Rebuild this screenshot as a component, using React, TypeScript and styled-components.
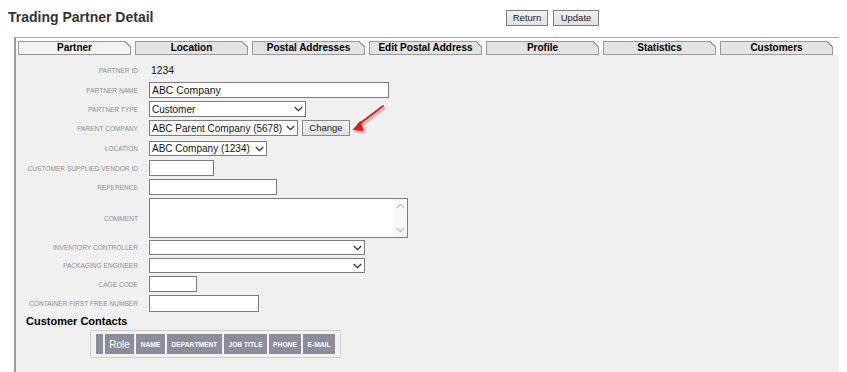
import React from 'react';
import styled, { createGlobalStyle } from 'styled-components';

const Global = createGlobalStyle`
  html, body { background: #ffffff; }
  body {
    margin: 8px;
    font-family: "Liberation Sans", Arial, sans-serif;
    color: #000;
  }
  * { box-sizing: border-box; }
`;

const Page = styled.div`
  position: relative;
`;

const Header = styled.header`
  display: grid;
  grid-template-columns: 498px auto;
  align-items: start;
  height: 29px;
`;

const Title = styled.h1`
  margin: 1px 0 0 0;
  font-size: 14px;
  line-height: 16px;
  font-weight: bold;
  color: #333;
`;

const ButtonGroup = styled.div`
  display: flex;
  gap: 5px;
  margin-top: 2px;
`;

const Button = styled.button<{ $w: number }>`
  width: ${(p) => p.$w}px;
  height: 16px;
  padding: 0;
  border: 1px solid #7d7d7d;
  background: linear-gradient(#f0f0f0, #e2e2e2);
  font-family: "Liberation Sans", Arial, sans-serif;
  font-size: 9.5px;
  line-height: 14px;
  color: #222;
`;

const Panel = styled.section`
  margin-left: 6px;
  width: 827px;
  border-top: 1px solid #a8a8a8;
  border-left: 2px solid #9a9a9a;
  border-right: 2px solid #a4a4a4;
  background: #f0f0f0;
  padding-bottom: 40px;
`;

const TabBar = styled.nav`
  display: flex;
  gap: 4px;
  padding: 3px 0 0 2px;
  background: #ffffff;
`;

const Tab = styled.div<{ $active?: boolean }>`
  position: relative;
  width: 113px;
  height: 14px;
  border: 1px solid #999;
  background: ${(p) => (p.$active ? '#f3f3f3' : '#e3e3e3')};
  font-size: 10px;
  font-weight: bold;
  line-height: 12px;
  text-align: center;
  color: #000;
  &::after {
    content: '';
    position: absolute;
    top: -1px;
    right: -1px;
    width: 6px;
    height: 6px;
    background: linear-gradient(to bottom left, #fff 0 43%, #999 43% 60%, transparent 60%);
  }
`;

const Form = styled.div`
  display: flex;
  flex-direction: column;
  padding-top: 7px;
`;

const Row = styled.div<{ $mt?: number; $h?: number }>`
  display: grid;
  grid-template-columns: 122px auto;
  column-gap: 11px;
  align-items: center;
  margin-top: ${(p) => p.$mt ?? 3}px;
  min-height: ${(p) => p.$h ?? 16}px;
`;

const Label = styled.label`
  text-align: right;
  font-size: 6.6px;
  text-transform: uppercase;
  color: #8e8e8e;
  white-space: nowrap;
`;

const Field = styled.div`
  display: flex;
  align-items: center;
  gap: 4px;
`;

const ValueText = styled.span`
  font-size: 10.4px;
  color: #111;
  padding-left: 2px;
`;

const TextInput = styled.input<{ $w: number; $h?: number }>`
  width: ${(p) => p.$w}px;
  height: ${(p) => p.$h ?? 16}px;
  border: 1px solid #7b7b7b;
  background: #fff;
  padding: 0 2px;
  margin: 0;
  font-family: "Liberation Sans", Arial, sans-serif;
  font-size: 10.4px;
  color: #111;
  outline: none;
`;

const SelectBox = styled.div<{ $w: number; $h?: number }>`
  width: ${(p) => p.$w}px;
  height: ${(p) => p.$h ?? 16}px;
  border: 1px solid #7b7b7b;
  background: #fff;
  display: flex;
  align-items: center;
  justify-content: space-between;
  padding: 0 2px 0 2px;
  font-size: 10px;
  color: #111;
  white-space: nowrap;
`;

const Chevron = ({ color = '#333' }: { color?: string }) => (
  <svg width="9" height="6" viewBox="0 0 9 6" style={{ flexShrink: 0 }}>
    <polyline points="0.8,1 4.5,4.6 8.2,1" fill="none" stroke={color} strokeWidth="1.3" />
  </svg>
);

const ChevronUp = ({ color = '#bdbdbd' }: { color?: string }) => (
  <svg width="9" height="6" viewBox="0 0 9 6">
    <polyline points="0.8,5 4.5,1.4 8.2,5" fill="none" stroke={color} strokeWidth="1.2" />
  </svg>
);

const SmallButton = styled.button`
  width: 48px;
  height: 16px;
  padding: 0;
  border: 1px solid #8a8a8a;
  background: linear-gradient(#efefef, #e0e0e0);
  font-family: "Liberation Sans", Arial, sans-serif;
  font-size: 9.5px;
  line-height: 14px;
  color: #222;
`;

const TextArea = styled.div<{ $w: number; $h: number }>`
  width: ${(p) => p.$w}px;
  height: ${(p) => p.$h}px;
  border: 1px solid #7b7b7b;
  background: #fff;
  display: flex;
  justify-content: flex-end;
`;

const ScrollTrack = styled.div`
  width: 13px;
  background: #f7f7f7;
  display: flex;
  flex-direction: column;
  justify-content: space-between;
  align-items: center;
  padding: 4px 0 4px;
`;

const Heading = styled.h2`
  margin: 3px 0 0 10px;
  font-size: 11px;
  line-height: 13px;
  font-weight: bold;
  color: #000;
`;

const ContactsTable = styled.div`
  margin: 2px 0 0 74px;
  display: inline-flex;
  align-self: flex-start;
  gap: 2px;
  padding: 3px 5px;
  border: 1px solid #cfcfcf;
`;

const HeadCell = styled.div<{ $w: number; $big?: boolean }>`
  width: ${(p) => p.$w}px;
  height: 20px;
  background: #8c8c9b;
  color: #fff;
  display: flex;
  align-items: center;
  justify-content: center;
  font-size: ${(p) => (p.$big ? '10px' : '6.7px')};
  font-weight: ${(p) => (p.$big ? 'normal' : 'bold')};
  white-space: nowrap;
`;

const Arrow = styled.svg`
  position: absolute;
  left: 340px;
  top: 94px;
  overflow: visible;
`;

const tabs = [
  'Partner',
  'Location',
  'Postal Addresses',
  'Edit Postal Address',
  'Profile',
  'Statistics',
  'Customers',
];

export default function App() {
  return (
    <Page>
      <Global />
      <Header>
        <Title>Trading Partner Detail</Title>
        <ButtonGroup>
          <Button $w={42}>Return</Button>
          <Button $w={46}>Update</Button>
        </ButtonGroup>
      </Header>
      <Panel>
        <TabBar>
          {tabs.map((t, i) => (
            <Tab key={t} $active={i === 0}>
              {t}
            </Tab>
          ))}
        </TabBar>
        <Form>
          <Row $mt={0} $h={17}>
            <Label>Partner ID</Label>
            <Field>
              <ValueText>1234</ValueText>
            </Field>
          </Row>
          <Row>
            <Label>Partner Name</Label>
            <Field>
              <TextInput $w={240} defaultValue="ABC Company" />
            </Field>
          </Row>
          <Row>
            <Label>Partner Type</Label>
            <Field>
              <SelectBox $w={157}>
                Customer
                <Chevron />
              </SelectBox>
            </Field>
          </Row>
          <Row>
            <Label>Parent Company</Label>
            <Field>
              <SelectBox $w={149}>
                ABC Parent Company (5678)
                <Chevron />
              </SelectBox>
              <SmallButton>Change</SmallButton>
            </Field>
          </Row>
          <Row $mt={5} $h={15}>
            <Label>Location</Label>
            <Field>
              <SelectBox $w={118} $h={15}>
                ABC Company (1234)
                <Chevron />
              </SelectBox>
            </Field>
          </Row>
          <Row $mt={4}>
            <Label>Customer Supplied Vendor ID</Label>
            <Field>
              <TextInput $w={65} />
            </Field>
          </Row>
          <Row $mt={3}>
            <Label>Reference</Label>
            <Field>
              <TextInput $w={128} />
            </Field>
          </Row>
          <Row $mt={3} $h={40}>
            <Label>Comment</Label>
            <Field>
              <TextArea $w={259} $h={40}>
                <ScrollTrack>
                  <ChevronUp />
                  <Chevron color="#bdbdbd" />
                </ScrollTrack>
              </TextArea>
            </Field>
          </Row>
          <Row $mt={2} $h={15}>
            <Label>Inventory Controller</Label>
            <Field>
              <SelectBox $w={216} $h={15}>
                <span />
                <Chevron />
              </SelectBox>
            </Field>
          </Row>
          <Row $mt={3} $h={15}>
            <Label>Packaging Engineer</Label>
            <Field>
              <SelectBox $w={216} $h={15}>
                <span />
                <Chevron />
              </SelectBox>
            </Field>
          </Row>
          <Row $mt={3}>
            <Label>Cage Code</Label>
            <Field>
              <TextInput $w={48} />
            </Field>
          </Row>
          <Row $mt={3} $h={17}>
            <Label>Container First Free Number</Label>
            <Field>
              <TextInput $w={110} $h={17} />
            </Field>
          </Row>
          <Heading>Customer Contacts</Heading>
          <ContactsTable>
            <HeadCell $w={7} />
            <HeadCell $w={29} $big>
              Role
            </HeadCell>
            <HeadCell $w={29}>NAME</HeadCell>
            <HeadCell $w={55}>DEPARTMENT</HeadCell>
            <HeadCell $w={43}>JOB TITLE</HeadCell>
            <HeadCell $w={32}>PHONE</HeadCell>
            <HeadCell $w={32}>E-MAIL</HeadCell>
          </ContactsTable>
        </Form>
      </Panel>
      <Arrow width="44" height="40" viewBox="0 0 44 40">
        <defs>
          <filter id="sh" x="-50%" y="-50%" width="200%" height="200%">
            <feDropShadow dx="1.5" dy="2" stdDeviation="1.3" floodColor="#000" floodOpacity="0.35" />
          </filter>
        </defs>
        <g filter="url(#sh)">
          <line x1="35" y1="4" x2="10" y2="23" stroke="#e01b1b" strokeWidth="2" strokeLinecap="round" />
          <polygon points="4.5,28 12.5,18.5 15.5,29" fill="#e01b1b" />
        </g>
      </Arrow>
    </Page>
  );
}
